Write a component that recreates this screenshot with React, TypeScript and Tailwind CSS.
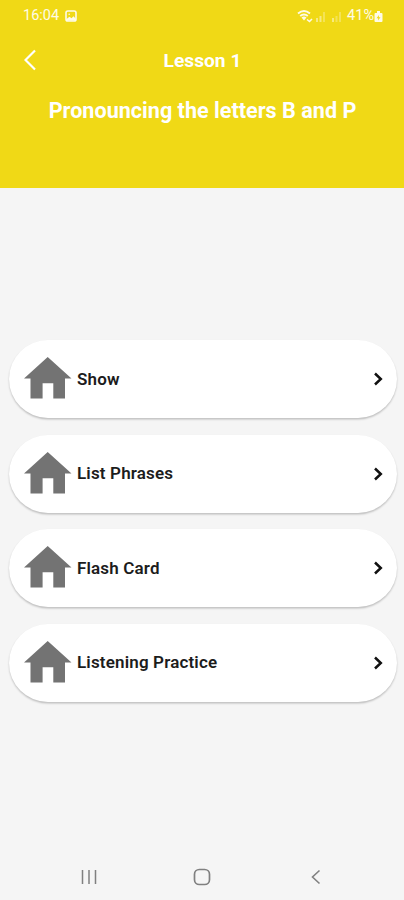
interface MenuItem {
  title: string
}

const items: MenuItem[] = [
  { title: 'Show' },
  { title: 'List Phrases' },
  { title: 'Flash Card' },
  { title: 'Listening Practice' },
]

function StatusBar() {
  return (
    <div className="flex h-8 items-center justify-between pl-[23px] pr-[21px] text-[14.5px] text-white/90">
      <div className="flex items-center gap-[6px]">
        <span>16:04</span>
        <svg viewBox="0 0 12 12" className="h-3 w-3" fill="none">
          <rect x="1" y="1" width="10" height="10" rx="1.8" stroke="currentColor" strokeWidth="1.6" />
          <path d="M1.5 10.5V9L4.5 6.8L6.5 8.3L8.5 6.3L10.5 8.5V10.5Z" fill="currentColor" />
          <circle cx="4.2" cy="4.2" r="0.8" fill="currentColor" />
        </svg>
      </div>
      <div className="flex items-center">
        <svg viewBox="0 0 46 14" className="mr-[4px] h-[14px] w-[46px]" fill="none">
          <path d="M1 4.5Q7 -0.5 13 4.5M3.2 7Q7 3.8 10.8 7" stroke="currentColor" strokeWidth="1.9" />
          <path d="M4.5 8.5Q7 6.5 9.5 8.5L7 11.5Z" fill="currentColor" />
          <path d="M10 10.5L12.5 12.5L15 10" stroke="currentColor" strokeWidth="1.6" />
          <g fill="currentColor" opacity="0.5">
            <path d="M19 9h2v4h-2zM22.5 7h2v6h-2z" />
            <path d="M26 3h2v10h-2z" opacity="0.6" />
            <path d="M35 9h2v4h-2z" />
            <path d="M38.5 7h2v6h-2zM42 3h2v10h-2z" opacity="0.6" />
          </g>
        </svg>
        <span className="text-[14.5px]">41%</span>
        <svg viewBox="0 0 9 13" className="h-[13px] w-[9px]" fill="currentColor">
          <path
            fillRule="evenodd"
            d="M3 1h3v2h1.5q1 0 1 1v7q0 1 -1 1h-6q-1 0 -1 -1V4q0 -1 1 -1H3zM5 5L2.5 8.2H4.2L4 10.5L6.5 7.2H4.8Z"
          />
        </svg>
      </div>
    </div>
  )
}

function HomeIcon() {
  return (
    <svg viewBox="0 0 48 42" className="mb-[2px] h-[42px] w-12 shrink-0" fill="#737373">
      <path d="M23.7 0L47.5 21.5H41V41.5H29.3V26.3H18.6V41.5H6.5V21.5H0Z" />
    </svg>
  )
}

function MenuCard({ item }: { item: MenuItem }) {
  return (
    <button className="flex h-[78px] w-full items-center rounded-full bg-white pl-[14.5px] pr-[14px] shadow-[0_1.5px_2px_rgba(0,0,0,0.22)]">
      <HomeIcon />
      <span className="ml-[5.5px] flex-1 text-left text-[17px] font-semibold tracking-[0.16px] text-[#1c1c1c]">
        {item.title}
      </span>
      <svg viewBox="0 0 10 14" className="h-[14px] w-[10px]" fill="none">
        <path d="M2 1.5L7.8 7L2 12.5" stroke="#111" strokeWidth="2.5" />
      </svg>
    </button>
  )
}

function NavigationBar() {
  return (
    <nav className="flex h-[46px] items-center justify-between pl-[81px] pr-[83px] text-[#808080]">
      <svg viewBox="0 0 16 16" className="h-4 w-4" fill="none" stroke="currentColor" strokeWidth="1.5">
        <path d="M1.5 1V15M8 1V15M14.5 1V15" />
      </svg>
      <svg viewBox="0 0 18 18" className="mr-[4px] h-[18px] w-[18px]" fill="none" stroke="currentColor" strokeWidth="1.7">
        <rect x="1.5" y="1.5" width="15" height="15" rx="4.8" />
      </svg>
      <svg viewBox="0 0 10 16" className="h-4 w-[10px]" fill="none" stroke="currentColor" strokeWidth="1.6">
        <path d="M8.5 1.5L1.5 8L8.5 14.5" />
      </svg>
    </nav>
  )
}

export default function App() {
  return (
    <div className="flex h-[900px] w-[404px] flex-col overflow-hidden bg-[#f5f5f5] font-['Roboto',sans-serif]">
      <header className="h-[188px] bg-[#f0d916] text-white">
        <StatusBar />
        <div className="grid h-[56px] grid-cols-[60px_1fr_60px] items-center">
          <button className="pl-6" aria-label="Back">
            <svg viewBox="0 0 12 22" className="h-[22px] w-3" fill="none">
              <path d="M11 1.5L1.5 11L11 20.5" stroke="currentColor" strokeWidth="2.2" />
            </svg>
          </button>
          <h1 className="pt-[3px] pl-px text-center text-[19.2px] font-bold">Lesson 1</h1>
        </div>
        <h2 className="mt-[7px] pl-px text-center text-[21.6px] leading-8 font-bold">Pronouncing the letters B and P</h2>
      </header>

      <main className="flex flex-1 flex-col justify-center gap-[16.5px] pr-[7px] pl-[9px]">
        {items.map((item) => (
          <MenuCard key={item.title} item={item} />
        ))}
      </main>

      <NavigationBar />
    </div>
  )
}
